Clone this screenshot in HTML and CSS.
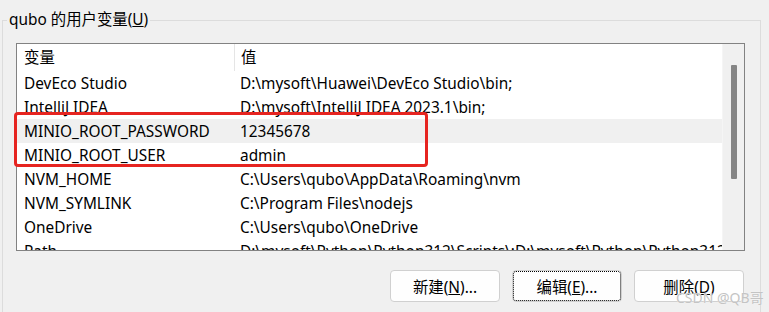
FILE: index.html
```html
<!DOCTYPE html>
<html lang="zh-CN">
<head>
    <meta charset="UTF-8">
    <title>用户变量</title>
    <link rel="stylesheet" href="styles.css">
</head>
<body>
    <fieldset class="group">
        <legend>qubo 的用户变量(<u>U</u>)</legend>

        <div class="list">
            <div class="list-body">
                <div class="row head">
                    <div class="col-name">变量</div>
                    <div class="col-value">值</div>
                </div>
                <div class="row"><div class="col-name">DevEco Studio</div><div class="col-value">D:\mysoft\Huawei\DevEco Studio\bin;</div></div>
                <div class="row"><div class="col-name">IntelliJ IDEA</div><div class="col-value">D:\mysoft\IntelliJ IDEA 2023.1\bin;</div></div>
                <div class="row hover"><div class="col-name">MINIO_ROOT_PASSWORD</div><div class="col-value">12345678</div></div>
                <div class="row"><div class="col-name">MINIO_ROOT_USER</div><div class="col-value">admin</div></div>
                <div class="row"><div class="col-name">NVM_HOME</div><div class="col-value">C:\Users\qubo\AppData\Roaming\nvm</div></div>
                <div class="row"><div class="col-name">NVM_SYMLINK</div><div class="col-value">C:\Program Files\nodejs</div></div>
                <div class="row"><div class="col-name">OneDrive</div><div class="col-value">C:\Users\qubo\OneDrive</div></div>
                <div class="row"><div class="col-name">Path</div><div class="col-value">D:\mysoft\Python\Python312\Scripts\;D:\mysoft\Python\Python312\</div></div>
            </div>
            <div class="scrollbar">
                <div class="thumb"></div>
            </div>
            <!-- 红框标注 -->
            <div class="mark"></div>
        </div>

        <div class="buttons">
            <button class="btn">新建(<u>N</u>)...</button>
            <button class="btn focus">编辑(<u>E</u>)...</button>
            <button class="btn">删除(<u>D</u>)</button>
        </div>
    </fieldset>

    <div class="watermark">CSDN @QB哥</div>
</body>
</html>
```

FILE: styles.css
```css
body {
    background-color: #f0f0f0;
    color: #000;
    font-family: "Noto Sans", "Noto Sans CJK SC", sans-serif;
    font-size: 15.4px;
    margin: 0;
    overflow: hidden;
}
.group {
    margin: 10px 8px 0 2px;
    padding: 0 0 20px 0;
    border: 1px solid #dcdcdc;
    min-width: 0;
}
.group legend {
    margin-left: 4px;
    padding: 0 2px;
    line-height: 20px;
}
.list {
    position: relative;
    display: flex;
    margin: 13px 0 0 13px;
    width: 727px;
    height: 206px;
    border: 1px solid #828282;
    background: #fff;
}
.list-body {
    flex: 1;
    overflow: hidden;
}
.row {
    display: flex;
    height: 24px;
    line-height: 25px;
    white-space: nowrap;
}
.row.head {
    height: 27px;
    line-height: 27px;
}
.row.head .col-name {
    border-right: 1px solid #e5e5e5;
}
.row.hover {
    background: #f0f0f0;
}
.col-name {
    width: 210px;
    padding-left: 7px;
    flex-shrink: 0;
}
.col-value {
    padding-left: 6px;
}
.scrollbar {
    width: 21px;
    background: #f0f0f0;
    border-left: 1px solid #f5f5f5;
    padding-top: 21px;
    display: flex;
    justify-content: center;
}
.thumb {
    width: 6px;
    height: 114px;
    background: #858585;
    border-radius: 1px;
}
.mark {
    position: absolute;
    left: -3px;
    top: 68px;
    width: 408px;
    height: 49px;
    border: 3px solid #e62420;
    border-radius: 4px;
}
.buttons {
    display: flex;
    justify-content: flex-end;
    gap: 12px;
    margin-top: 19px;
    width: 741px;
}
.btn {
    width: 110px;
    height: 32px;
    font-family: inherit;
    font-size: 15.4px;
    color: #000;
    background: #fefefe;
    border: 1px solid #d0d0d0;
    border-radius: 4px;
}
.btn.focus {
    outline: 1px dotted #000;
    outline-offset: -2px;
}
.watermark {
    position: absolute;
    left: 676px;
    top: 287px;
    font-size: 14px;
    color: #c4c4c4;
    text-shadow: 0 0 1px #fff;
}
```
